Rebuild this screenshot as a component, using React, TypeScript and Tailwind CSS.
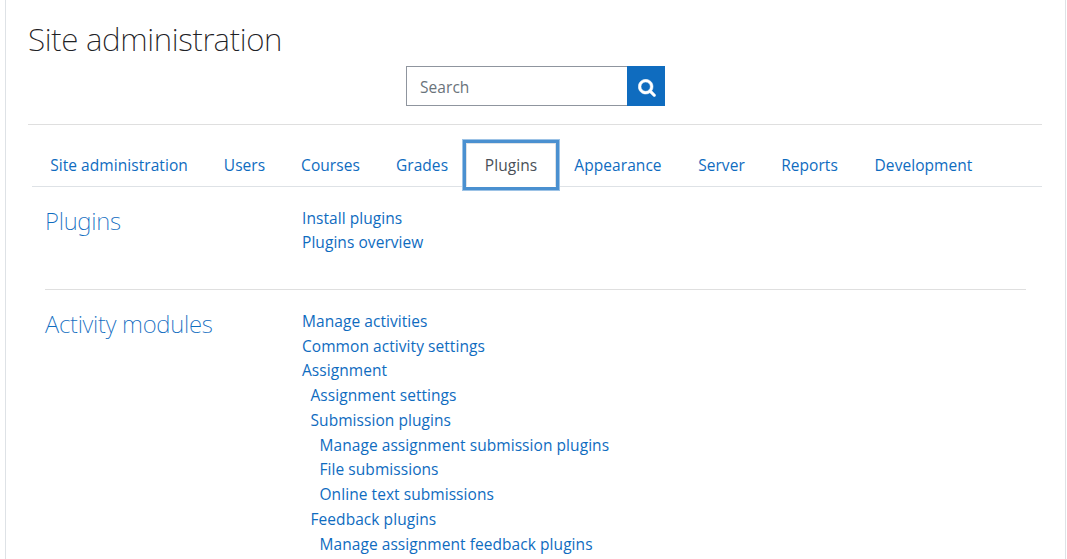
const tabs = [
  { label: 'Site administration', width: 'w-[174px]' },
  { label: 'Users', width: 'w-[77px]' },
  { label: 'Courses', width: 'w-[95px]' },
  { label: 'Grades', width: 'w-[88px]' },
  { label: 'Plugins', width: 'w-[90px]' },
  { label: 'Appearance', width: 'w-[124px]' },
  { label: 'Server', width: 'w-[83px]' },
  { label: 'Reports', width: 'w-[93px]' },
  { label: 'Development', width: 'w-[135px]' },
];

type Item = { label: string; level: 0 | 1 | 2 };

const indent = { 0: 'pl-0', 1: 'pl-[8.5px]', 2: 'pl-[17.5px]' };

const pluginLinks: Item[] = [
  { label: 'Install plugins', level: 0 },
  { label: 'Plugins overview', level: 0 },
];

const activityLinks: Item[] = [
  { label: 'Manage activities', level: 0 },
  { label: 'Common activity settings', level: 0 },
  { label: 'Assignment', level: 0 },
  { label: 'Assignment settings', level: 1 },
  { label: 'Submission plugins', level: 1 },
  { label: 'Manage assignment submission plugins', level: 2 },
  { label: 'File submissions', level: 2 },
  { label: 'Online text submissions', level: 2 },
  { label: 'Feedback plugins', level: 1 },
  { label: 'Manage assignment feedback plugins', level: 2 },
];

function Section({ title, items }: { title: string; items: Item[] }) {
  return (
    <section className="flex">
      <h3 className="-mt-[0.5px] w-[257px] shrink-0 font-['Noto_Sans',sans-serif] text-[24px] leading-[32px] font-extralight tracking-[-0.25px]">
        <a href="#">{title}</a>
      </h3>
      <ul>
        {items.map((item) => (
          <li key={item.label} className={`h-[24.75px] leading-[24.75px] whitespace-nowrap ${indent[item.level]}`}>
            <a href="#">{item.label}</a>
          </li>
        ))}
      </ul>
    </section>
  );
}

export default function App() {
  return (
    <div className="h-[559px] overflow-hidden bg-white pr-px pl-[5px] font-['Open_Sans','Noto_Sans',sans-serif] text-[15.5px] font-normal tracking-[0.06px] text-[#0f6cbf]">
      <main className="h-full border-x border-[#dee2e6] pr-[23px] pl-[22px]">
        <h1 className="h-[66px] pt-[19px] font-['Noto_Sans',sans-serif] text-[31.5px] leading-[40px] font-extralight tracking-[-0.34px] text-[#1d2125]">
          Site administration
        </h1>

        <form className="ml-[378px] flex h-10 w-[259px]">
          <input
            type="text"
            placeholder="Search"
            className="h-10 w-[221px] border border-r-0 border-[#8f959e] px-[13px] pt-px outline-none placeholder:text-[#6a737b]"
          />
          <button type="button" aria-label="Search" className="flex h-10 w-[38px] items-center justify-center bg-[#0f6cbf]">
            <svg viewBox="-30 -30 1724 1724" className="mt-[3px] ml-px h-[18px] w-[18px] fill-white stroke-white stroke-[50]">
              <path d="M1152 704q0-185-131.500-316.500T704 256 387.500 387.500 256 704t131.500 316.500T704 1152t316.500-131.500T1152 704zm512 832q0 52-38 90t-90 38q-54 0-90-38l-343-342q-179 124-399 124-143 0-273.500-55.500t-225-150-150-225T0 704t55.500-273.500 150-225 225-150T704 0t273.500 55.500 225 150 150 225T1408 704q0 220-124 399l343 343q37 37 37 90z" />
            </svg>
          </button>
        </form>

        <hr className="mt-[18px] border-[#dfdfdf]" />

        <nav className="mt-[18px] ml-1 flex h-[44px] border-b border-[#dee2e6]">
          {tabs.map((tab) => (
            <a
              key={tab.label}
              href="#"
              className={`flex h-[44px] shrink-0 items-center justify-center pt-[1.5px] whitespace-nowrap ${tab.width} ${
                tab.label === 'Plugins'
                  ? 'border border-[#dee2e6] border-b-white bg-white text-[#495057] shadow-[0_0_0_3px_#4a90d0,0_0_0_4px_#9dc3e6]'
                  : ''
              }`}
            >
              {tab.label}
            </a>
          ))}
        </nav>

        <div className="mr-4 ml-[17px] pt-[18.5px]">
          <Section title="Plugins" items={pluginLinks} />
          <hr className="mt-[34px] mb-[18.8px] border-[#dfdfdf]" />
          <Section title="Activity modules" items={activityLinks} />
        </div>
      </main>
    </div>
  );
}
